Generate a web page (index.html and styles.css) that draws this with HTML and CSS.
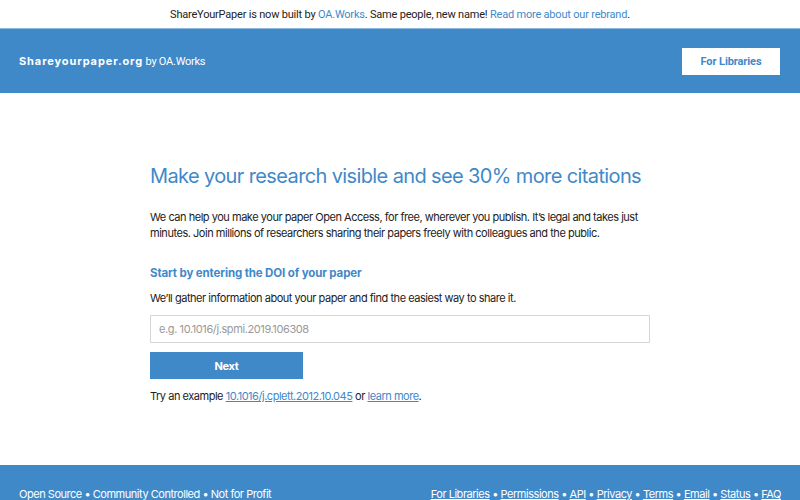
FILE: index.html
```html
<!DOCTYPE html>
<html>
<head>
<meta charset="utf-8">
<link rel="stylesheet" href="styles.css">
</head>
<body>
<div class="banner"><span>ShareYourPaper is now built by <a href="#">OA.Works</a>. Same people, new name! <a href="#">Read more about our rebrand</a>.</span></div>
<header class="header">
  <div class="brand"><span class="brand-name">Shareyourpaper.org</span> by OA.Works</div>
  <a class="header-btn" href="#">For Libraries</a>
</header>
<main class="main">
  <h1 class="title">Make your research visible and see 30% more citations</h1>
  <p class="lead">We can help you make your paper Open Access, for free, wherever you publish. It’s legal and takes just minutes. Join millions of researchers sharing their papers freely with colleagues and the public.</p>
  <h2 class="subtitle">Start by entering the DOI of your paper</h2>
  <p class="info">We’ll gather information about your paper and find the easiest way to share it.</p>
  <input class="doi" type="text" placeholder="e.g. 10.1016/j.spmi.2019.106308">
  <button class="next">Next</button>
  <p class="example">Try an example <a href="#">10.1016/j.cplett.2012.10.045</a> or <a href="#">learn more</a>.</p>
</main>
<footer class="footer">
  <div class="footer-left">Open Source • Community Controlled • Not for Profit</div>
  <div class="footer-right"><a href="#">For Libraries</a> • <a href="#">Permissions</a> • <a href="#">API</a> • <a href="#">Privacy</a> • <a href="#">Terms</a> • <a href="#">Email</a> • <a href="#">Status</a> • <a href="#">FAQ</a></div>
</footer>
</body>
</html>
```

FILE: styles.css
```css
* { box-sizing: border-box; }
html, body { margin: 0; padding: 0; }
body {
  font-family: Inter, "Noto Sans", sans-serif;
  color: #222;
  background: #fff;
  font-size: 11px;
  letter-spacing: -0.47px;
}
a { color: #3f89c9; text-decoration: none; }

.banner {
  height: 29px;
  display: flex;
  align-items: center;
  justify-content: center;
  font-family: Roboto, Inter, sans-serif;
  font-size: 11px;
  letter-spacing: -0.2px;
  color: #222;
  border-bottom: 1px solid #8db8df;
}

.header {
  height: 64px;
  background: #3f89c9;
  display: flex;
  align-items: center;
  justify-content: space-between;
  padding: 0 20px 0 19px;
  color: #fff;
}
.brand { font-size: 11px; font-family: Roboto, Inter, sans-serif; letter-spacing: -0.25px; }
.brand-name { font-weight: 700; letter-spacing: 0.9px; font-family: Inter, sans-serif; }
.header-btn {
  background: #fff;
  color: #3f89c9;
  font-weight: 700;
  font-size: 11px;
  letter-spacing: -0.1px;
  width: 98px;
  height: 27px;
  display: flex;
  align-items: center;
  justify-content: center;
  font-family: Roboto, Inter, sans-serif;
}

.main {
  width: 500px;
  margin: 0 auto;
  padding: 71px 0 61px 0;
}
.title {
  margin: 0;
  font-size: 20px;
  font-weight: 400;
  letter-spacing: -0.62px;
  color: #3f89c9;
  line-height: 24px;
  white-space: nowrap;
}
.lead {
  margin: 21px 0 0 0;
  line-height: 16px;
}
.subtitle {
  margin: 24px 0 0 0;
  font-size: 11.5px;
  font-weight: 700;
  letter-spacing: -0.13px;
  color: #3f89c9;
  line-height: 16px;
}
.info { margin: 9px 0 0 0; line-height: 16px; }
.doi {
  display: block;
  width: 100%;
  height: 28px;
  margin-top: 9px;
  border: 1px solid #d6d6d6;
  padding: 0 8px;
  font-family: Inter, sans-serif;
  font-size: 11px;
  letter-spacing: -0.4px;
  color: #222;
  outline: none;
}
.doi::placeholder { color: #999; }
.next {
  display: block;
  margin-top: 9px;
  width: 153px;
  height: 27px;
  background: #3f89c9;
  color: #fff;
  border: none;
  font-family: Inter, sans-serif;
  font-weight: 700;
  font-size: 11px;
  letter-spacing: -0.3px;
}
.example { margin: 9px 0 0 0; line-height: 16px; }
.example a { text-decoration: underline; }

.footer {
  background: #3f89c9;
  color: #fff;
  height: 60px;
  display: flex;
  justify-content: space-between;
  align-items: flex-start;
  padding: 22px 19px 0 19px;
  font-size: 11px;
}
.footer a { color: #fff; text-decoration: underline; }
```
